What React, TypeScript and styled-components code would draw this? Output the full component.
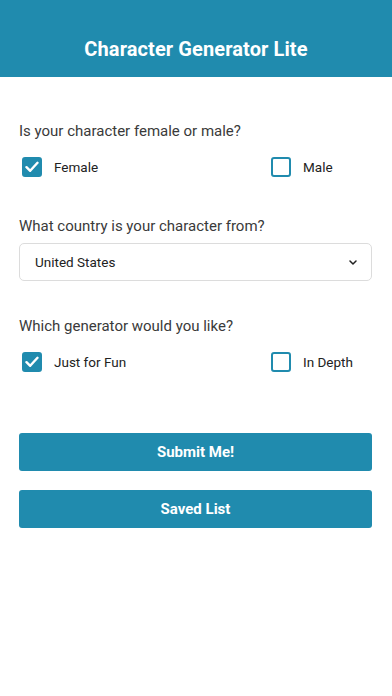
import React, { useState } from "react";
import styled, { createGlobalStyle } from "styled-components";

const Global = createGlobalStyle`
  html, body { margin: 0; padding: 0; background: #ffffff; }
  body { font-family: Roboto, "Noto Sans", Arial, sans-serif; }
  * { box-sizing: border-box; }
`;

const ACCENT = "#208bae";

const Page = styled.div`
  width: 392px;
  min-height: 696px;
  background: #fff;
  display: flex;
  flex-direction: column;
`;

const Header = styled.header`
  height: 77px;
  background: ${ACCENT};
  display: flex;
  align-items: flex-end;
  justify-content: center;
  padding-bottom: 16px;
`;

const Title = styled.h1`
  margin: 0;
  color: #fff;
  font-size: 20px;
  font-weight: 700;
  letter-spacing: 0.1px;
`;

const Content = styled.main`
  padding: 45px 20px 0 19px;
  display: flex;
  flex-direction: column;
`;

const Section = styled.section<{ $gap?: number }>`
  display: flex;
  flex-direction: column;
  margin-bottom: ${(p) => p.$gap ?? 0}px;
`;

const Question = styled.div<{ $mb?: number }>`
  font-size: 15px;
  color: #3a3a3a;
  line-height: 18px;
  margin-bottom: ${(p) => p.$mb ?? 17}px;
`;

const OptionRow = styled.div`
  display: grid;
  grid-template-columns: 249px 1fr;
  padding-left: 3px;
`;

const Option = styled.label`
  display: flex;
  align-items: center;
  gap: 12px;
  font-size: 13.5px;
  color: #222;
  cursor: pointer;
  height: 20px;
`;

const Box = styled.span<{ $checked: boolean }>`
  width: 20px;
  height: 20px;
  border-radius: 3px;
  border: 2.5px solid ${ACCENT};
  background: ${(p) => (p.$checked ? ACCENT : "#fff")};
  display: flex;
  align-items: center;
  justify-content: center;
  flex-shrink: 0;
`;

const SelectBox = styled.div`
  height: 38px;
  border: 1px solid #dcdcdc;
  border-radius: 5px;
  display: flex;
  align-items: center;
  justify-content: space-between;
  padding: 0 14px 0 15px;
  font-size: 13.5px;
  color: #222;
`;

const Button = styled.button<{ $mb?: number }>`
  height: 38px;
  width: 100%;
  border: none;
  border-radius: 3px;
  background: ${ACCENT};
  color: #fff;
  font-family: Roboto, Arial, sans-serif;
  font-size: 15px;
  font-weight: 700;
  margin-bottom: ${(p) => p.$mb ?? 0}px;
  cursor: pointer;
`;

const Check = () => (
  <svg width="14" height="12" viewBox="0 0 14 12" fill="none">
    <path d="M1.5 6.2 L5.2 9.8 L12.5 1.8" stroke="#fff" strokeWidth="2.4" strokeLinecap="round" strokeLinejoin="round" />
  </svg>
);

const Chevron = () => (
  <svg width="8" height="5" viewBox="0 0 8 5" fill="none">
    <path d="M1 1 L4 4 L7 1" stroke="#222" strokeWidth="1.5" strokeLinecap="round" strokeLinejoin="round" />
  </svg>
);

function Choice({ label, checked, onClick }: { label: string; checked: boolean; onClick: () => void }) {
  return (
    <Option onClick={onClick}>
      <Box $checked={checked}>{checked && <Check />}</Box>
      {label}
    </Option>
  );
}

export default function App() {
  const [gender, setGender] = useState("Female");
  const [gen, setGen] = useState("Just for Fun");
  return (
    <Page>
      <Global />
      <Header>
        <Title>Character Generator Lite</Title>
      </Header>
      <Content>
        <Section $gap={40}>
          <Question>Is your character female or male?</Question>
          <OptionRow>
            <Choice label="Female" checked={gender === "Female"} onClick={() => setGender("Female")} />
            <Choice label="Male" checked={gender === "Male"} onClick={() => setGender("Male")} />
          </OptionRow>
        </Section>
        <Section $gap={36}>
          <Question $mb={8}>What country is your character from?</Question>
          <SelectBox>
            <span>United States</span>
            <Chevron />
          </SelectBox>
        </Section>
        <Section $gap={61}>
          <Question>Which generator would you like?</Question>
          <OptionRow>
            <Choice label="Just for Fun" checked={gen === "Just for Fun"} onClick={() => setGen("Just for Fun")} />
            <Choice label="In Depth" checked={gen === "In Depth"} onClick={() => setGen("In Depth")} />
          </OptionRow>
        </Section>
        <Button $mb={19}>Submit Me!</Button>
        <Button>Saved List</Button>
      </Content>
    </Page>
  );
}
